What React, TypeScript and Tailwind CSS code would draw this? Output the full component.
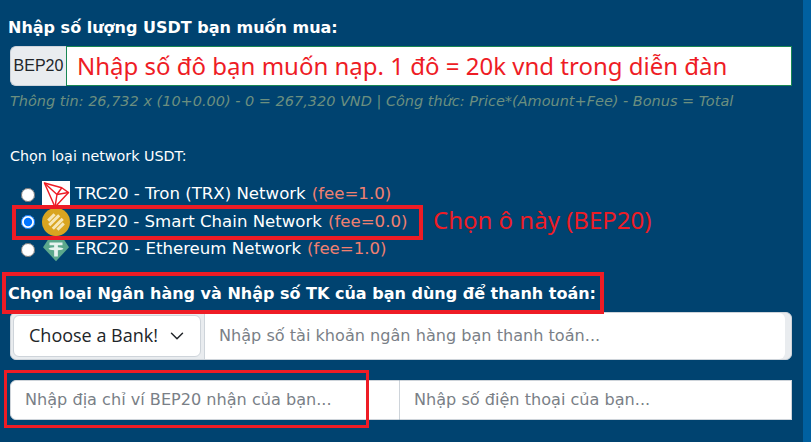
import { ChevronDown } from "lucide-react";

const networks = [
  { id: "trc", label: "TRC20 - Tron (TRX) Network", fee: "(fee=1.0)", checked: false, icon: <TronIcon /> },
  { id: "bep", label: "BEP20 - Smart Chain Network", fee: "(fee=0.0)", checked: true, icon: <BnbIcon /> },
  { id: "erc", label: "ERC20 - Ethereum Network", fee: "(fee=1.0)", checked: false, icon: <TetherIcon /> },
];

function TronIcon() {
  return (
    <svg viewBox="0 0 28 28" className="h-[27px] w-[28px] bg-white">
      <g fill="none" stroke="#ee1c25" strokeWidth="1.5" strokeLinejoin="round">
        <path d="M2 2 L20 7 L27 12 L13 27 Z" />
        <path d="M2 2 L15 14 L13 27" />
        <path d="M15 14 L27 12" />
        <path d="M15 14 L20 7" />
      </g>
    </svg>
  );
}

function BnbIcon() {
  return (
    <svg viewBox="0 0 28 28" className="h-[28px] w-[28px]">
      <circle cx="14" cy="14" r="14" fill="#d9a520" />
      <g fill="#f6e7b8" transform="rotate(-45 14 14)">
        <rect x="9.5" y="6" width="9" height="3" />
        <rect x="7" y="10" width="14" height="3" />
        <rect x="7" y="15" width="14" height="3" />
        <rect x="9.5" y="19" width="9" height="3" />
      </g>
    </svg>
  );
}

function TetherIcon() {
  return (
    <svg viewBox="0 0 28 28" className="h-[26px] w-[28px]">
      <path d="M6 2 H22 L28 11 L14 26 L0 11 Z" fill="#5ba88c" />
      <path d="M7 6 H21 V9 H16 V11 C19 11.2 22 11.8 22 12.6 C22 13.4 19 14 16 14.2 V21 H12 V14.2 C9 14 6 13.4 6 12.6 C6 11.8 9 11.2 12 11 V9 H7 Z" fill="#e8f3ef" />
    </svg>
  );
}

export default function App() {
  return (
    <div className="flex h-[442px] w-[811px] overflow-hidden bg-[#004370] font-['DejaVu_Sans',sans-serif]">
      <div className="relative w-[803px] pl-[10px] pr-[11px]">
        <h3 className="-ml-[2px] pt-[18px] text-[16px] font-bold leading-[20px] text-white">
          Nhập số lượng USDT bạn muốn mua:
        </h3>

        <div className="mt-[8px] flex h-[40px]">
          <span className="flex w-[56px] items-center justify-center rounded-l-[6px] border border-[#ced4da] border-r-0 bg-[#e9ecef] font-['Liberation_Sans',sans-serif] text-[16px] text-[#212529]">
            BEP20
          </span>
          <div className="flex flex-1 items-center border border-[#198754] bg-white pl-[10px] font-['Noto_Sans',sans-serif] text-[24px] text-[#ee1c25]">
            Nhập số đô bạn muốn nạp. 1 đô = 20k vnd trong diễn đàn
          </div>
        </div>

        <p className="mt-[5px] text-[14.48px] italic leading-[20px] text-[#6c8f7f]">
          Thông tin: 26,732 x (10+0.00) - 0 = 267,320 VND | Công thức: Price*(Amount+Fee) - Bonus = Total
        </p>

        <p className="mt-[35px] text-[14.3px] leading-[20px] text-white">
          Chọn loại network USDT:
        </p>

        <div className="mt-[15px] flex flex-col">
          {networks.map((n) => (
            <label key={n.id} className="flex h-[27.5px] items-center">
              <input
                type="radio"
                name="network"
                defaultChecked={n.checked}
                className="ml-[11px] h-[14px] w-[14px] accent-[#0075ff]"
              />
              <span className="ml-[7px] flex w-[28px] items-center justify-center">{n.icon}</span>
              <span className="ml-[5px] text-[16.6px] text-white">{n.label}</span>
              <span className="ml-[6px] text-[16.6px] text-[#f08070]">{n.fee}</span>
            </label>
          ))}
        </div>

        <h3 className="-ml-[2px] mt-[20px] text-[16px] font-bold leading-[20px] text-white">
          Chọn loại Ngân hàng và Nhập số TK của bạn dùng để thanh toán:
        </h3>

        <div className="mt-[8px] flex h-[48.5px] items-center rounded-[6px] border border-[#ced4da] bg-[#e9ecef]">
          <div className="ml-[2px] flex h-[42px] w-[188px] items-center justify-between rounded-[6px] border border-[#ced4da] bg-white pl-[15px] pr-[12px] font-['Open_Sans',sans-serif] text-[18px] text-[#212529]">
            Choose a Bank!
            <ChevronDown className="h-[22px] w-[22px] shrink-0" strokeWidth={1.6} />
          </div>
          <div className="ml-[3px] flex flex-1 items-center self-stretch rounded-r-[6px] border-l border-[#ced4da] bg-white pl-[14px] text-[16.1px] text-[#7a7f87]">
            Nhập số tài khoản ngân hàng bạn thanh toán...
          </div>
          <div className="w-[6px]" />
        </div>

        <div className="mt-[20px] flex h-[40px]">
          <div className="flex w-[390px] items-center rounded-l-[6px] border border-[#ced4da] bg-white pl-[14px] text-[16.1px] text-[#7a7f87]">
            Nhập địa chỉ ví BEP20 nhận của bạn...
          </div>
          <div className="flex flex-1 items-center border border-l-0 border-[#ced4da] bg-white pl-[14px] text-[16.1px] text-[#7a7f87]">
            Nhập số điện thoại của bạn...
          </div>
        </div>

        {/* annotation boxes drawn over the form */}
        <div className="pointer-events-none absolute left-[12px] top-[205px] h-[35px] w-[411px] border-[4px] border-[#ee1c25]" />
        <span className="absolute left-[433px] top-[202px] font-['Noto_Sans',sans-serif] text-[24px] text-[#ee1c25]">
          Chọn ô này (BEP20)
        </span>
        <div className="pointer-events-none absolute left-[2px] top-[272px] h-[42px] w-[602px] border-[4px] border-[#ee1c25]" />
        <div className="pointer-events-none absolute left-[4px] top-[370px] h-[58px] w-[365px] border-[3px] border-[#ee1c25]" />
      </div>
      <div className="w-[8px] bg-[#0060a0]" />
    </div>
  );
}
